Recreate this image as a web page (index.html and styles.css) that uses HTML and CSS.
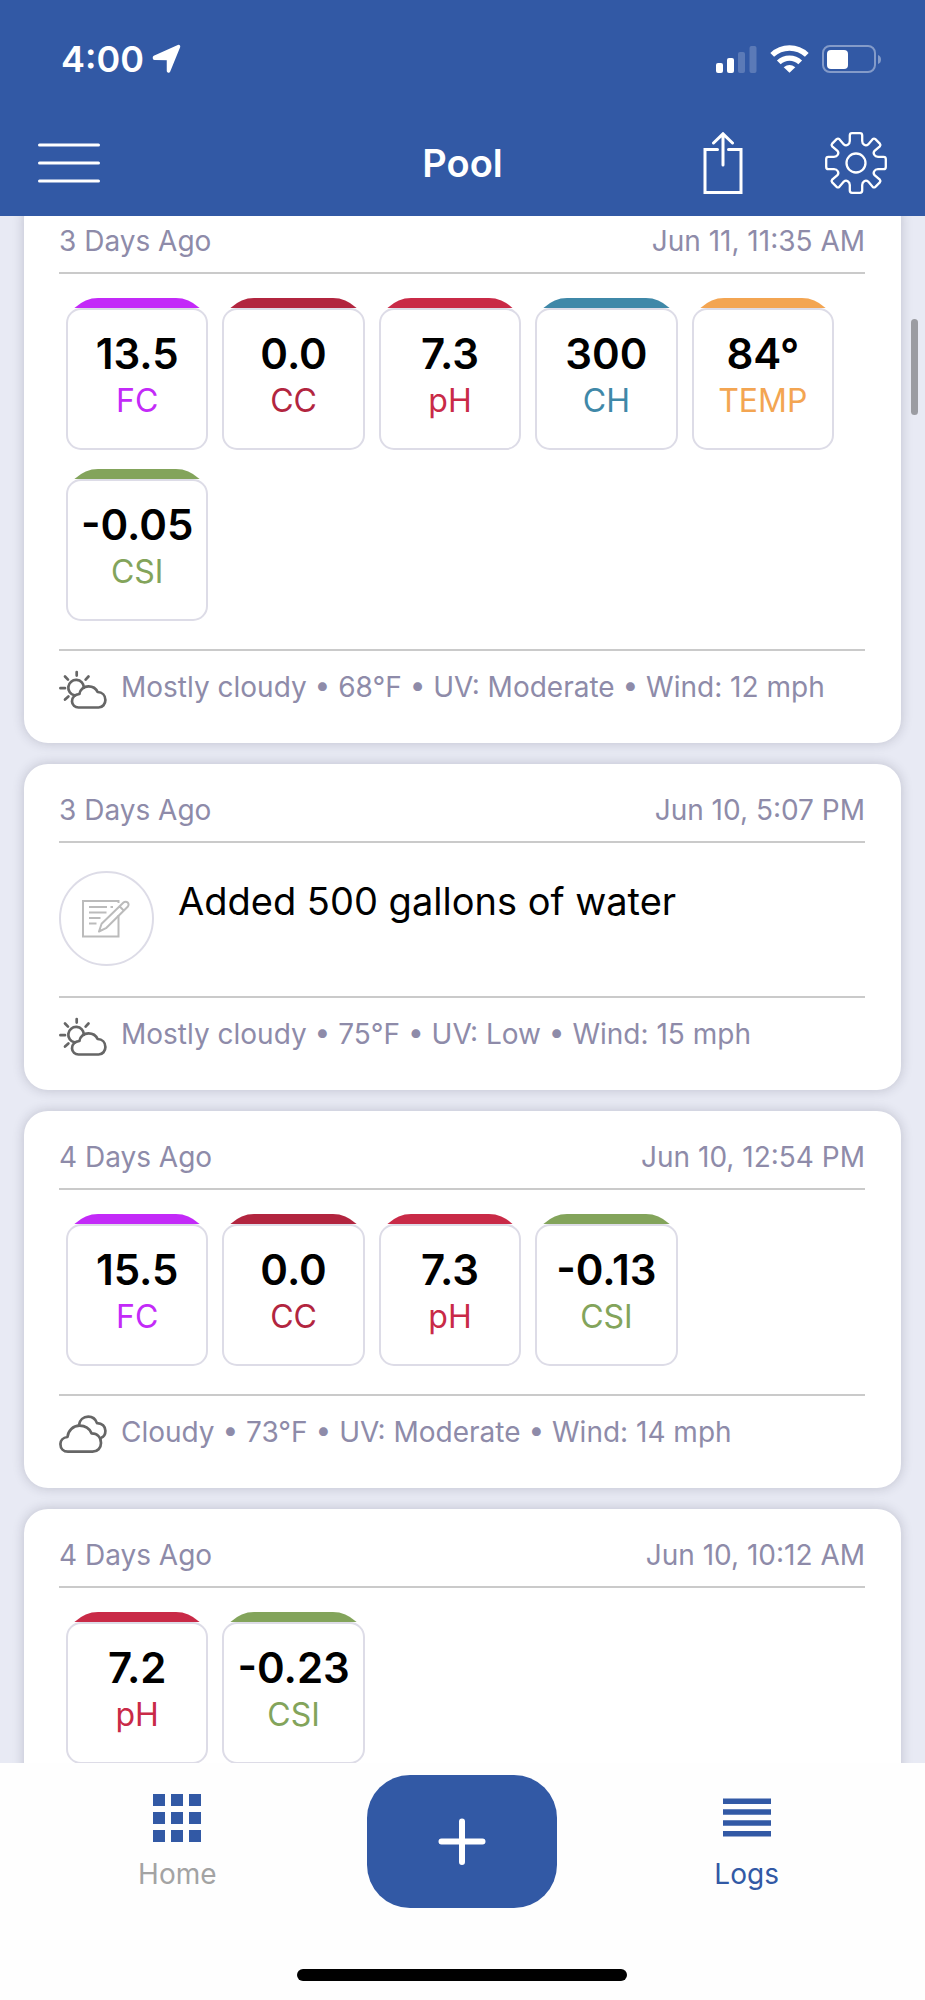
FILE: index.html
```html
<!DOCTYPE html>
<html lang="en">
<head>
<meta charset="utf-8">
<meta name="viewport" content="width=device-width, initial-scale=1">
<title>Pool</title>
<link rel="stylesheet" href="styles.css">
</head>
<body>
<svg class="defs" aria-hidden="true">
  <symbol id="sun-cloud" viewBox="0 0 48 44">
    <g fill="none" stroke="#666" stroke-width="2.7" stroke-linecap="round" stroke-linejoin="round" transform="translate(0 3)">
      <path d="M17.7 2V5.6M6 6.5L9 9.6M29.5 6.5L26.6 9.6M1.4 18.2H6M6 29.5L9.4 26.4"/>
      <path d="M15.6 25.4A7.8 7.8 0 1 1 24.9 17.8"/>
      <path d="M19.5 37.5H39.6C43.6 37.500 46.4 34 46.4 30C46.4 25.5 43.2 22.2 38.6 22C37 18.5 33.5 16.3 29.5 16.3C24.8 16.3 21 19.5 20.4 24C16 24.4 12.8 27.5 13 31.4C13.2 35 16 37.5 19.5 37.5Z"/>
    </g>
  </symbol>
  <symbol id="clouds" viewBox="0 0 48 44">
    <g fill="none" stroke="#666" stroke-width="2.7" stroke-linecap="round" stroke-linejoin="round">
      <path d="M9 39.7H33.5C38.5 39.7 42 36 42 31C42 25.5 38.5 21.5 32.6 21.4C30.5 16.5 26 13.7 20.5 13.7C14 13.7 9 18.5 8.5 25C4 25.5 1.4 28.5 1.4 32C1.4 36.5 4.5 39.7 9 39.7Z"/>
      <path d="M20 13C20.6 8 24.4 4.7 29.3 4.7C33.4 4.7 36.5 7 38 11.1C43 11 46.4 14.5 46.4 18.8C46.4 22.2 45 24.7 42.2 25.8"/>
    </g>
  </symbol>
</svg>

<header class="topbar">
  <div class="status">
    <div class="status-group">
      <span class="clock">4:00</span>
      <svg width="30" height="30" viewBox="0 0 30 30" aria-hidden="true"><path d="M2.500 13.300L26.500 2.500L16.500 27V14.500L2.500 14.300Z" fill="#fff" stroke="#fff" stroke-width="3.500" stroke-linejoin="round"/></svg>
    </div>
    <div class="status-group status-icons">
      <svg width="41" height="30" viewBox="0 0 41 30" fill="#fff" aria-hidden="true"><rect x="0" y="19" width="7" height="10" rx="2"/><rect x="11" y="14" width="7" height="15" rx="2"/><g opacity=".2"><rect x="22" y="8" width="7" height="21" rx="2"/><rect x="33.500" y="2" width="7" height="27" rx="2"/></g></svg>
      <svg width="39" height="30" viewBox="0 0 39 30" aria-hidden="true"><g fill="none" stroke="#fff" stroke-width="5.400"><path d="M2.200 10.900A25 25 0 0 1 36.800 10.900"/><path d="M8.800 18.400A15.500 15.500 0 0 1 30.200 18.400"/></g><path d="M19.500 28.800L13.700 23.300Q19.500 18.800 25.300 23.300Z" fill="#fff"/></svg>
      <svg width="60" height="30" viewBox="0 0 60 30" aria-hidden="true"><rect x="1" y="2" width="52" height="26" rx="7" fill="none" stroke="#fff" stroke-opacity=".4" stroke-width="2"/><path d="M56 11Q59 12 59 15.500T56 20Z" fill="#fff" fill-opacity=".4"/><rect x="5" y="6" width="21" height="19" rx="4" fill="#fff"/></svg>
    </div>
  </div>
  <div class="navrow">
    <button class="icon-button" type="button" aria-label="Menu">
      <svg width="62" height="62" viewBox="0 0 62 62"><path d="M1.500 13H60.500M1.500 31H60.500M1.500 49H60.500" stroke="#fff" stroke-width="3" stroke-linecap="round"/></svg>
    </button>
    <h1 class="title">Pool</h1>
    <div class="actions">
      <button class="icon-button" type="button" aria-label="Share">
        <svg width="40" height="62" viewBox="0 0 40 62"><path d="M14.500 17.500H2V60.500H38V17.500H25.500M20 2V33M10.500 11L20 1.800L29.500 11" fill="none" stroke="#fff" stroke-width="3" stroke-linecap="round"/></svg>
      </button>
      <button class="icon-button" type="button" aria-label="Settings">
        <svg width="62" height="62" viewBox="-31 -31 62 62">
          <g id="gear-quarter"><path d="M-29.800 0V-4Q-29.800 -6.200 -27.600 -6.200H-22C-18.600 -6.200 -16.400 -9.600 -18.600 -12.200L-23.800 -16.600Q-25 -18 -23.800 -19.400L-19.400 -23.800Q-18 -25 -16.600 -23.800L-12.200 -18.600C-9.600 -16.400 -6.200 -18.600 -6.200 -22V-27.600Q-6.200 -29.800 -4 -29.800H0" fill="none" stroke="#fff" stroke-width="2.300"/></g>
          <use href="#gear-quarter" transform="rotate(90)"/><use href="#gear-quarter" transform="rotate(180)"/><use href="#gear-quarter" transform="rotate(270)"/>
          <circle r="9.500" fill="none" stroke="#fff" stroke-width="2.300"/>
        </svg>
      </button>
    </div>
  </div>
</header>

<main class="viewport">
  <div class="feed">
    <article class="card">
      <div class="card-head"><span>3 Days Ago</span><time>Jun 11, 11:35 AM</time></div>
      <div class="tiles">
        <div class="tile fc"><div class="tile-body"><strong>13.5</strong><span>FC</span></div></div>
        <div class="tile cc"><div class="tile-body"><strong>0.0</strong><span>CC</span></div></div>
        <div class="tile ph"><div class="tile-body"><strong>7.3</strong><span>pH</span></div></div>
        <div class="tile ch"><div class="tile-body"><strong>300</strong><span>CH</span></div></div>
        <div class="tile temp"><div class="tile-body"><strong>84°</strong><span>TEMP</span></div></div>
        <div class="tile csi"><div class="tile-body"><strong>-0.05</strong><span>CSI</span></div></div>
      </div>
      <div class="weather"><svg class="weather-icon" aria-hidden="true"><use href="#sun-cloud"/></svg><span>Mostly cloudy • 68°F • UV: Moderate • Wind: 12 mph</span></div>
    </article>

    <article class="card">
      <div class="card-head"><span>3 Days Ago</span><time>Jun 10, 5:07 PM</time></div>
      <div class="note">
        <svg class="note-icon" viewBox="0 0 95 95" fill="none" aria-hidden="true">
          <circle cx="47.500" cy="47.500" r="46.500" stroke="#dddce7" stroke-width="2"/>
          <g stroke="#bbb" stroke-width="2">
            <path d="M59.500 32V30H24V65.500H59.500V44"/>
            <path d="M30 36H48M51.500 36H54M30 41.500H47.500M30 47H41.500M30 52.500H37.500"/>
            <path d="M40 60.500L42.600 52.800L64.500 31.500A2.900 2.900 0 0 1 68.700 35.700L47 57.200ZM60.500 35.300L64.700 39.500" stroke-linejoin="round"/>
          </g>
        </svg>
        <p class="note-text">Added 500 gallons of water</p>
      </div>
      <div class="weather"><svg class="weather-icon" aria-hidden="true"><use href="#sun-cloud"/></svg><span>Mostly cloudy • 75°F • UV: Low • Wind: 15 mph</span></div>
    </article>

    <article class="card">
      <div class="card-head"><span>4 Days Ago</span><time>Jun 10, 12:54 PM</time></div>
      <div class="tiles">
        <div class="tile fc"><div class="tile-body"><strong>15.5</strong><span>FC</span></div></div>
        <div class="tile cc"><div class="tile-body"><strong>0.0</strong><span>CC</span></div></div>
        <div class="tile ph"><div class="tile-body"><strong>7.3</strong><span>pH</span></div></div>
        <div class="tile csi"><div class="tile-body"><strong>-0.13</strong><span>CSI</span></div></div>
      </div>
      <div class="weather"><svg class="weather-icon" aria-hidden="true"><use href="#clouds"/></svg><span>Cloudy • 73°F • UV: Moderate • Wind: 14 mph</span></div>
    </article>

    <article class="card">
      <div class="card-head"><span>4 Days Ago</span><time>Jun 10, 10:12 AM</time></div>
      <div class="tiles">
        <div class="tile ph"><div class="tile-body"><strong>7.2</strong><span>pH</span></div></div>
        <div class="tile csi"><div class="tile-body"><strong>-0.23</strong><span>CSI</span></div></div>
      </div>
    </article>
  </div>
  <div class="scroll-thumb"></div>
</main>

<nav class="tabbar">
  <div class="tabs">
    <a class="tab" href="#home">
      <svg width="48" height="48" viewBox="0 0 48 48" fill="#3259a5" aria-hidden="true"><path d="M0 0H12V12H0ZM18 0H30V12H18ZM36 0H48V12H36ZM0 18H12V30H0ZM18 18H30V30H18ZM36 18H48V30H36ZM0 36H12V48H0ZM18 36H30V48H18ZM36 36H48V48H36Z"/></svg>
      <span>Home</span>
    </a>
    <button class="add" type="button" aria-label="Add log">
      <svg width="48" height="48" viewBox="0 0 48 48" aria-hidden="true"><path d="M3.500 23.500H44.500M24 3.500V44" stroke="#fff" stroke-width="6" stroke-linecap="round"/></svg>
    </button>
    <a class="tab active" href="#logs" aria-current="page">
      <svg width="48" height="48" viewBox="0 0 48 48" fill="#3259a5" aria-hidden="true"><path d="M0 4.500H48V10H0ZM0 15.300H48V20.800H0ZM0 26.200H48V31.700H0ZM0 37H48V42.500H0Z"/></svg>
      <span>Logs</span>
    </a>
  </div>
  <div class="home-indicator"></div>
</nav>
</body>
</html>
```
FILE: styles.css
```css
* { box-sizing: border-box; }

body {
  margin: 0;
  height: 100vh;
  display: flex;
  flex-direction: column;
  background: #e8eaf4;
  font-family: Inter, "Liberation Sans", sans-serif;
  color: #000;
}

button {
  border: 0;
  padding: 0;
  background: none;
  cursor: pointer;
}

svg { display: block; flex: none; }

.defs { position: absolute; width: 0; height: 0; }

.topbar {
  flex: none;
  background: #3259a5;
  color: #fff;
  padding: 36px 38px 22px;
}

.status {
  display: flex;
  justify-content: space-between;
  align-items: center;
  height: 46px;
  padding: 0 5px 0 23px;
}

.status-group {
  display: flex;
  align-items: center;
  gap: 8px;
}

.status-icons { gap: 13px; }

.clock {
  font-size: 36px;
  font-weight: 600;
  line-height: 46px;
}

.navrow {
  display: grid;
  grid-template-columns: 1fr auto 1fr;
  align-items: center;
  margin-top: 50px;
}

.icon-button { justify-self: start; }

.title {
  margin: 0;
  font-size: 38px;
  font-weight: 600;
  line-height: 62px;
}

.actions {
  justify-self: end;
  display: flex;
  gap: 82px;
}

.viewport {
  position: relative;
  flex: 1;
  min-height: 0;
  overflow: hidden;
}

.feed {
  display: flex;
  flex-direction: column;
  gap: 21px;
  margin-top: -21px;
  padding: 0 24px;
}

.card {
  padding: 26px 36px 0 35px;
  border-radius: 24px;
  background: #fff;
  box-shadow: 0 0 12px rgba(40, 40, 70, 0.22);
}

.card-head {
  display: flex;
  justify-content: space-between;
  padding-bottom: 11px;
  border-bottom: 2px solid #cacaca;
  color: #8e8ba9;
  font-size: 28px;
  line-height: 40px;
}

.tiles {
  display: grid;
  grid-template-columns: repeat(auto-fill, minmax(142px, 1fr));
  gap: 19px 14px;
  padding: 24px 31px 28px 7px;
}

/* The coloured cap shows only above the bordered body. */
.tile {
  padding-top: 10px;
  border-radius: 32px 32px 0 0;
  background: linear-gradient(currentColor 10px, transparent 10px);
}

.tile-body {
  display: flex;
  flex-direction: column;
  align-items: center;
  height: 142px;
  padding-top: 20px;
  border: 2px solid #dddce7;
  border-radius: 15px;
  background: #fff;
}

.tile-body strong {
  color: #000;
  font-size: 42px;
  font-weight: 600;
  line-height: 48px;
}

.tile-body span {
  font-size: 32px;
  line-height: 46px;
}

.fc { color: #c32af8; }
.cc { color: #b2253f; }
.ph { color: #c92a47; }
.ch { color: #3f88a8; }
.temp { color: #f3a552; }
.csi { color: #83a45b; }

.note {
  display: flex;
  gap: 24px;
  padding: 28px 0 30px;
}

.note-icon { width: 95px; height: 95px; }

.note-text {
  margin: 6px 0 0;
  font-size: 38px;
  line-height: 48px;
}

.weather {
  display: flex;
  gap: 14px;
  padding: 16px 0 36px;
  border-top: 2px solid #cacaca;
  color: #8e8ba9;
  font-size: 28px;
  line-height: 40px;
}

.weather-icon { width: 48px; height: 44px; margin-bottom: -4px; }

.scroll-thumb {
  position: absolute;
  top: 103px;
  right: 7px;
  width: 7px;
  height: 96px;
  border-radius: 4px;
  background: #9b9ca2;
}

.tabbar {
  flex: none;
  padding: 12px 36px 19px 35px;
  background: #fefefe;
}

.tabs {
  display: grid;
  grid-template-columns: repeat(3, 1fr);
  justify-items: center;
}

.tab {
  display: flex;
  flex-direction: column;
  align-items: center;
  gap: 12px;
  padding-top: 19px;
  color: #a3a3a3;
  font-size: 28px;
  line-height: 40px;
  text-decoration: none;
}

.tab.active { color: #3259a5; }

.add {
  display: grid;
  place-items: center;
  width: 190px;
  height: 133px;
  border-radius: 43px;
  background: #3259a5;
}

.home-indicator {
  width: 330px;
  height: 12px;
  margin: 61px auto 0;
  border-radius: 6px;
  background: #000;
}
```
